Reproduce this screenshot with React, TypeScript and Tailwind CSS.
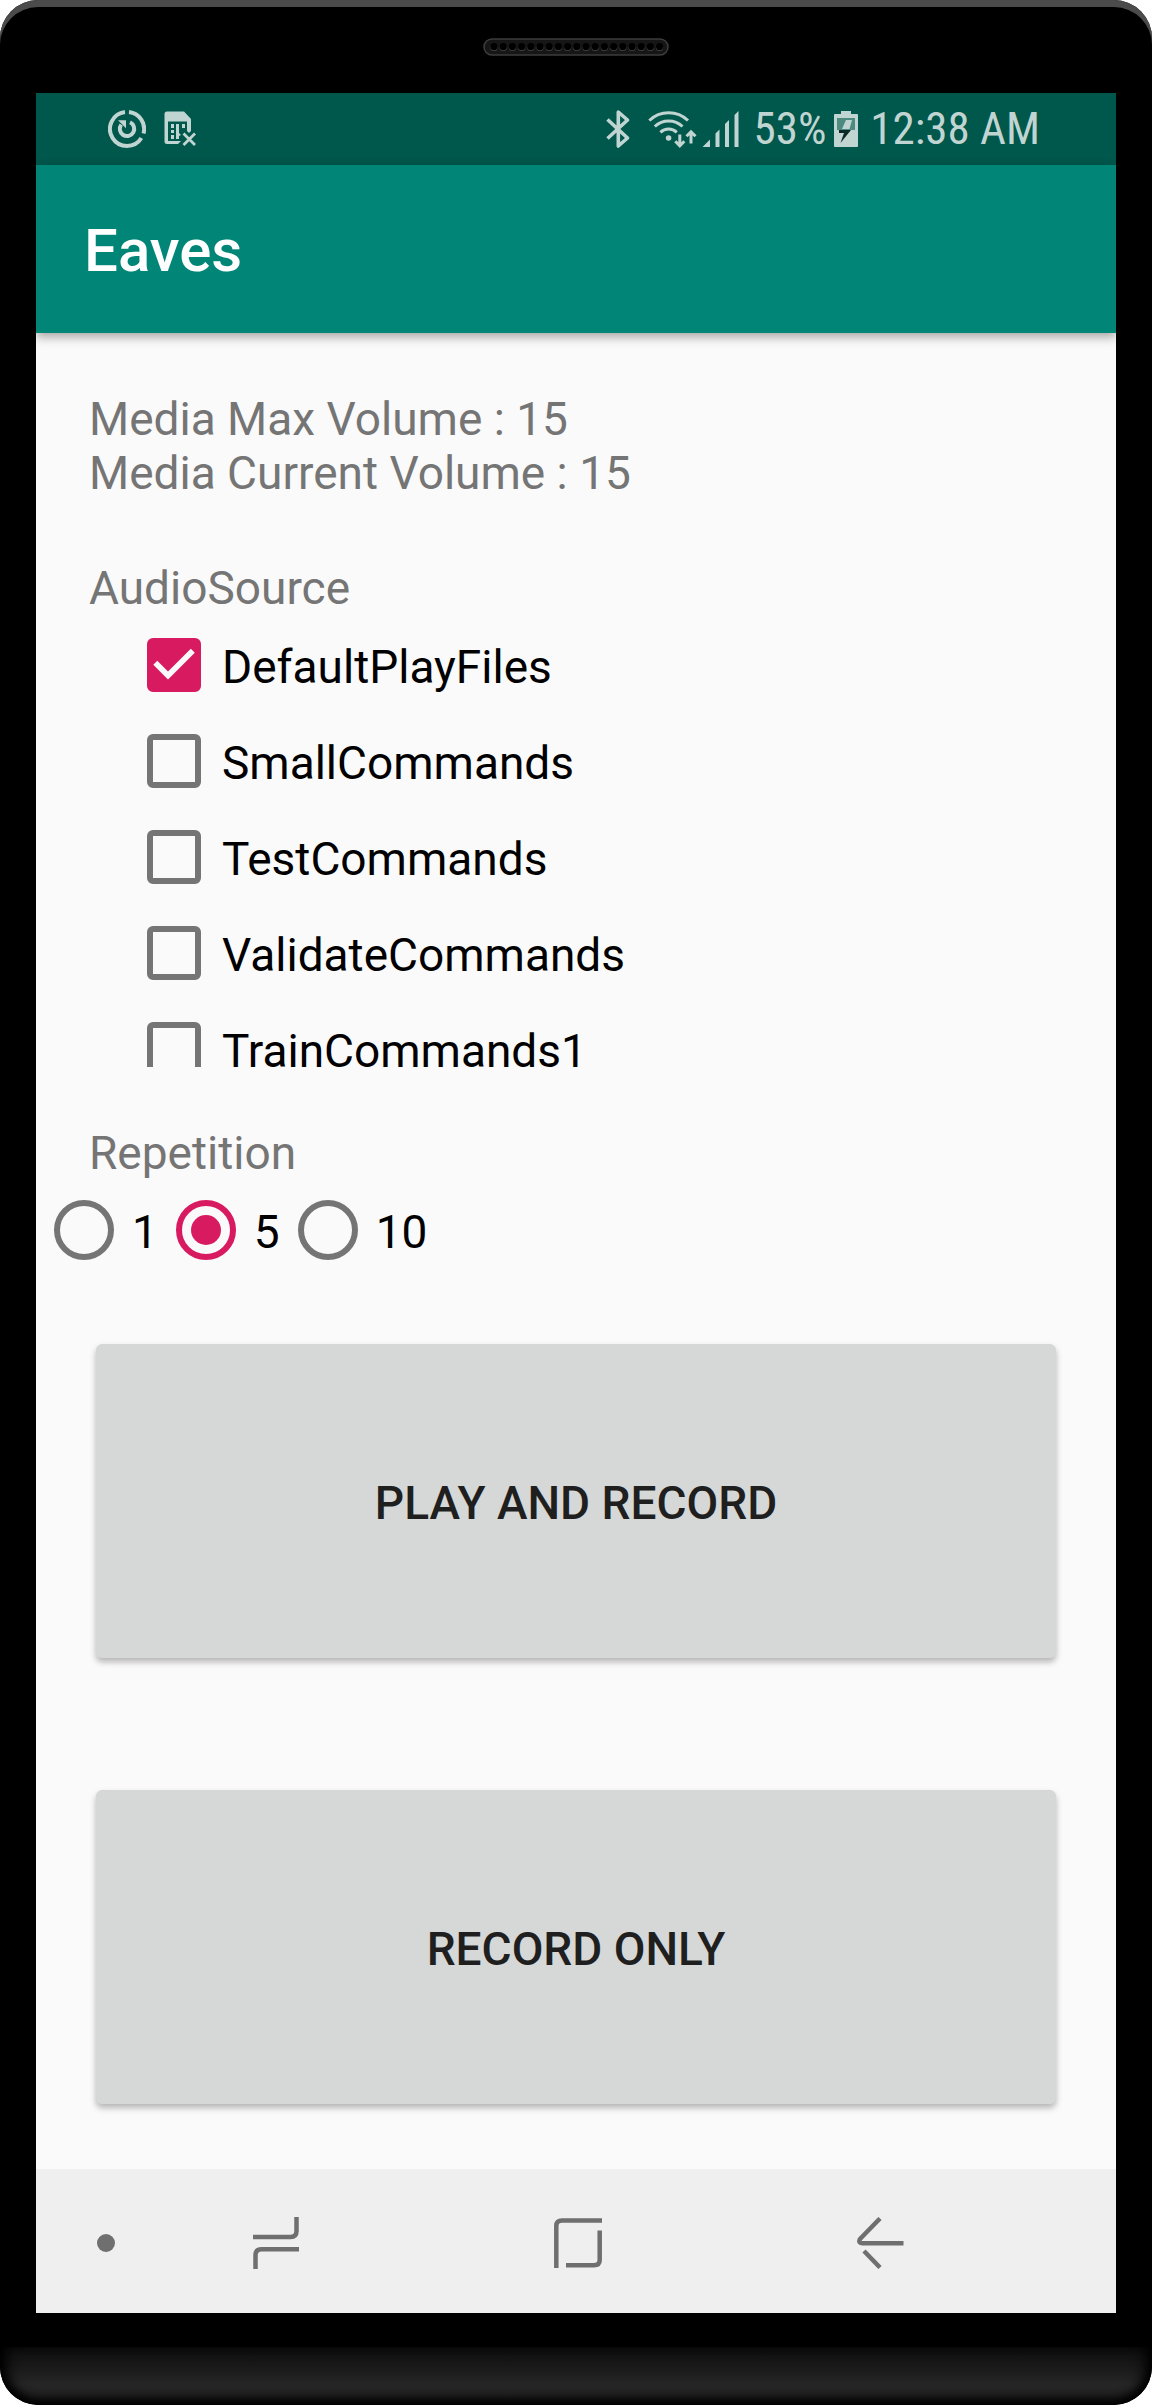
import { useState } from "react";

const sources = [
  "DefaultPlayFiles",
  "SmallCommands",
  "TestCommands",
  "ValidateCommands",
  "TrainCommands1",
];

const repetitions = ["1", "5", "10"];

function Speaker() {
  return (
    <svg width="186" height="18" viewBox="0 0 186 18" aria-hidden="true">
      <rect x="1" y="1" width="184" height="16" rx="8" fill="#161616" stroke="#3d3d3d" strokeWidth="1.5" />
      {Array.from({ length: 19 }, (_, i) => (
        <g key={i}>
          <circle cx={11 + i * 9.2} cy="9.5" r="3.6" fill="#4a4a4a" />
          <circle cx={11 + i * 9.2} cy="8.6" r="3.6" fill="#000" />
        </g>
      ))}
    </svg>
  );
}

function SyncIcon() {
  return (
    <svg width="38" height="38" viewBox="0 0 38 38" fill="none" stroke="currentColor" strokeWidth="4" aria-hidden="true">
      <path d="M21 2.1A17 17 0 0 1 35.5 23.5" />
      <path d="M33.4 28A17 17 0 1 1 17 2.1" />
      <path d="M22 12.3A7.2 7.2 0 1 1 13.2 14.6" />
      <path d="M10 10.2h8v8z" fill="currentColor" stroke="none" />
    </svg>
  );
}

function SimIcon() {
  return (
    <svg width="32" height="36" viewBox="0 0 32 36" aria-hidden="true">
      <path
        fill="currentColor"
        fillRule="evenodd"
        d="M3 0.5H20L27 8V20L25 22L23 20V10.5H4V30H17L14 33H3Q0.5 33 0.5 30.5V3Q0.5 0.5 3 0.5Z"
      />
      <path
        fill="currentColor"
        d="M7 13h3v4H7zM7 19h3v3H7zM7 24h3v4H7zM12 13h3v9l2 2-2 1v3h-3zM18 13h3v4h-3z"
      />
      <path d="M19.5 22.5L31 34M31 22.5L19.5 34" stroke="currentColor" strokeWidth="2.8" />
    </svg>
  );
}

function BluetoothIcon() {
  return (
    <svg width="24" height="38" viewBox="0 0 24 38" fill="none" stroke="currentColor" strokeWidth="3.6" strokeLinejoin="round" aria-hidden="true">
      <path d="M1.5 9.5L21.5 28L12.3 36V2L21.5 10L1.5 28.5" />
    </svg>
  );
}

function WifiIcon() {
  return (
    <svg width="49" height="37" viewBox="0 0 49 37" fill="none" stroke="currentColor" strokeWidth="3" aria-hidden="true">
      <path d="M1.3 9.5A28 28 0 0 1 40 9.5" />
      <path d="M6.8 15.5A20 20 0 0 1 34.5 15.5" />
      <path d="M12.4 21.3A12 12 0 0 1 28.8 21.3" />
      <circle cx="20.6" cy="27" r="2.8" fill="currentColor" stroke="none" />
      <path d="M31.8 23.5V35M27.3 30.3L31.8 34.8L36.3 30.3M43 32.5V21M38.5 25.3L43 20.8L47.5 25.3" />
    </svg>
  );
}

function SignalIcon() {
  return (
    <svg width="37" height="37" viewBox="0 0 37 37" fill="currentColor" aria-hidden="true">
      <path d="M0.5 36L8 28.5V36zM13.5 22.5L17.5 18.5V36H13.5zM23 13L27 9V36H23zM32.5 4L36.5 0V36H32.5z" />
    </svg>
  );
}

function BatteryIcon() {
  return (
    <svg width="24" height="36" viewBox="0 0 24 36" aria-hidden="true">
      <path fill="currentColor" d="M7 0H17V3H23Q24 3 24 4V35Q24 36 23 36H1Q0 36 0 35V4Q0 3 1 3H7Z" />
      <path fill="#4d8a80" d="M3 7H21V19H3Z" />
      <path fill="#c0d5d1" d="M12 9H18L15.500 18H8Z" />
      <path fill="#0c2a25" d="M5 19H17L6.500 32L10 22H5Z" />
    </svg>
  );
}

function RecentsIcon() {
  return (
    <svg width="46" height="52" viewBox="0 0 46 52" fill="none" stroke="currentColor" strokeWidth="4.500" aria-hidden="true">
      <path d="M43.500 0V14Q43.500 20 37.500 20H0M2.500 52V38Q2.500 32.200 8.500 32.200H46" />
    </svg>
  );
}

function HomeIcon() {
  return (
    <svg width="48" height="50" viewBox="0 0 48 50" fill="none" stroke="currentColor" strokeWidth="4.500" aria-hidden="true">
      <path d="M2.300 50V8Q2.300 2.500 8 2.500H48M45.700 12.500V42Q45.700 47.300 40 47.300H12" />
    </svg>
  );
}

function BackIcon() {
  return (
    <svg width="47" height="52" viewBox="0 0 47 52" fill="none" stroke="currentColor" strokeWidth="4.500" strokeLinejoin="round" aria-hidden="true">
      <path d="M23 1.500L3 22Q1 26.200 5 26.200H46.500M7 34L23 50.500" />
    </svg>
  );
}

function SourceItem({ name, checked, onChange }: { name: string; checked: boolean; onChange: () => void }) {
  return (
    <li>
      <label className="flex h-24 items-center gap-[21px] text-black">
        <span className="grid shrink-0">
          <input
            type="checkbox"
            checked={checked}
            onChange={onChange}
            className="col-start-1 row-start-1 size-[54px] appearance-none rounded-md border-6 border-[#757575] checked:border-[#d81b60] checked:bg-[#d81b60]"
          />
          {checked && (
            <svg className="pointer-events-none col-start-1 row-start-1" width="54" height="54" viewBox="0 0 54 54" fill="none" stroke="#fafafa" strokeWidth="5.600" aria-hidden="true">
              <path d="M8.300 24.800L21 37.500L45.800 12.700" />
            </svg>
          )}
        </span>
        <span className="pt-1">{name}</span>
      </label>
    </li>
  );
}

function ActionButton({ children }: { children: string }) {
  return (
    <button
      type="button"
      className="h-[314px] w-full rounded-md bg-[#d6d8d7] pt-1 font-medium text-[#1f1f1f] shadow-[0_4px_6px_rgba(0,0,0,0.28)]"
    >
      {children}
    </button>
  );
}

export default function App() {
  const [picked, setPicked] = useState<string[]>(["DefaultPlayFiles"]);
  const [repetition, setRepetition] = useState("5");

  const toggle = (name: string) =>
    setPicked((list) => (list.includes(name) ? list.filter((n) => n !== name) : [...list, name]));

  return (
    <div className="bg-white font-[Roboto,sans-serif]">
      <div className="flex flex-col overflow-hidden rounded-[38px] bg-black shadow-[inset_0_7px_0_#4b4b4b]">
        <div className="flex h-[93px] items-center justify-center">
          <Speaker />
        </div>

        <div className="mx-9 flex flex-col bg-[#fafafa] text-[46px] leading-[54px]">
          <div className="flex h-[72px] items-center justify-between bg-[#00574b] pr-[76px] pl-[72px] text-[45px] text-[#c0d5d1]">
            <div className="flex items-center gap-[18px]">
              <SyncIcon />
              <SimIcon />
            </div>
            <div className="flex items-center">
              <BluetoothIcon />
              <span className="ml-[18px]"><WifiIcon /></span>
              <span className="ml-[5px]"><SignalIcon /></span>
              <span className="ml-3.5 font-['Roboto_Condensed',Roboto,sans-serif]">53%</span>
              <span className="ml-2"><BatteryIcon /></span>
              <time className="ml-3 font-['Roboto_Condensed',Roboto,sans-serif]">12:38 AM</time>
            </div>
          </div>

          <header className="flex h-[168px] items-center bg-[#008577] px-12 pt-1 shadow-[0_4px_10px_rgba(0,0,0,0.35)]">
            <h1 className="text-[60px] leading-[70px] font-medium text-white">Eaves</h1>
          </header>

          <main className="flex flex-col pt-[59px] pb-[65px]">
            <div className="px-[53px] text-[#757575]">
              <p>Media Max Volume : 15</p>
              <p>Media Current Volume : 15</p>
            </div>

            <h2 id="source-title" className="mt-[61px] px-[53px] text-[#757575]">AudioSource</h2>
            <ul
              aria-labelledby="source-title"
              className="mt-0.5 ml-[111px] h-[450px] overflow-y-auto [scrollbar-width:none]"
            >
              {sources.map((name) => (
                <SourceItem key={name} name={name} checked={picked.includes(name)} onChange={() => toggle(name)} />
              ))}
            </ul>

            <h2 id="repetition-title" className="mt-[59px] px-[53px] text-[#757575]">Repetition</h2>
            <div role="radiogroup" aria-labelledby="repetition-title" className="mt-0.5 flex h-24 items-center gap-[18px] px-[18px]">
              {repetitions.map((value) => (
                <label key={value} className="flex items-center gap-[18px] text-black">
                  <span className="grid shrink-0 place-items-center">
                    <input
                      type="radio"
                      name="repetition"
                      value={value}
                      checked={repetition === value}
                      onChange={() => setRepetition(value)}
                      className="col-start-1 row-start-1 size-[60px] appearance-none rounded-full border-6 border-[#757575] checked:border-[#d81b60]"
                    />
                    {repetition === value && (
                      <span className="pointer-events-none col-start-1 row-start-1 size-[30px] rounded-full bg-[#d81b60]" />
                    )}
                  </span>
                  <span className="pt-1">{value}</span>
                </label>
              ))}
            </div>

            <div className="mt-[66px] flex flex-col gap-[132px] px-[60px]">
              <ActionButton>PLAY AND RECORD</ActionButton>
              <ActionButton>RECORD ONLY</ActionButton>
            </div>
          </main>

          <nav className="flex h-36 items-center bg-[#efefef] pt-1 pr-[84px] pl-[61px] text-[#6f6f6f]">
            <button type="button" aria-label="Pin navigation bar" className="size-[18px] rounded-full bg-[#6f6f6f]" />
            <div className="ml-[10px] grid h-full flex-1 grid-cols-3">
              <button type="button" aria-label="Recent apps" className="grid place-items-center"><RecentsIcon /></button>
              <button type="button" aria-label="Home" className="grid place-items-center"><HomeIcon /></button>
              <button type="button" aria-label="Back" className="grid place-items-center"><BackIcon /></button>
            </div>
          </nav>
        </div>

        <div className="mt-[34px] h-[58px] rounded-b-[38px] bg-linear-to-b from-[#0c0c0c] via-[#262626] via-65% to-[#1c1c1c] shadow-[inset_0_-6px_10px_#000,inset_14px_0_14px_-8px_#000,inset_-14px_0_14px_-8px_#000]" />
      </div>
    </div>
  );
}
